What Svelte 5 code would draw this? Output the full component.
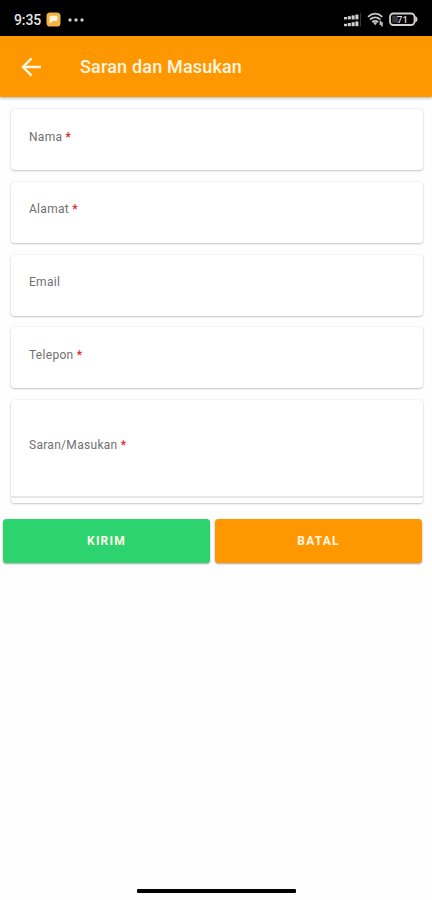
<script>
  const fields = [
    { label: 'Nama', required: true },
    { label: 'Alamat', required: true },
    { label: 'Email', required: false },
    { label: 'Telepon', required: true },
    { label: 'Saran/Masukan', required: true, area: true }
  ];
  const bars = [0, 1, 2, 3];
</script>

<div class="screen">
  <div class="status">
    <span class="time">9:35</span>
    <svg class="app-icon" width="15" height="15" viewBox="0 0 15 15">
      <rect x="0.5" y="0.5" width="14" height="14" rx="3.6" fill="#f5b344" />
      <path d="M4.8 3.8h5.5q1.2 0 1.2 1.2v2.8q0 1.2-1.2 1.2H7l-3.4 2.6V5q0-1.2 1.2-1.2Z" fill="#fff5dc" />
    </svg>
    <svg class="dots" width="16" height="4" viewBox="0 0 16 4" fill="#d8d8d8">
      <rect x="0.5" y="0.5" width="3" height="3" rx="1" /><rect x="6.5" y="0.5" width="3" height="3" rx="1" /><rect x="12.5" y="0.5" width="3" height="3" rx="1" />
    </svg>
    <svg class="signal" width="18" height="16" viewBox="0 0 18 16" fill="#d0d0d0">
      {#each bars as i}
        <rect x={0 + i * 3.8} y={5 - i * 0.8} width="3" height={2.4 + i * 0.8} />
        <rect x={0 + i * 3.8} y={11.8 - i * 0.8} width="3" height={2.4 + i * 0.8} />
      {/each}
      <rect x="16" y="1" width="0.8" height="13.5" fill="#484848" />
    </svg>
    <svg class="wifi" width="18" height="15" viewBox="0 0 18 15" fill="none" stroke="#c8c8c8" stroke-width="1.7">
      <path d="M1 4.8Q8.2-1.5 15.4 4.8" />
      <path d="M3 7.5q5.2-4.3 10.4 0" />
      <path d="M5.2 10q3-2.4 6 0" />
      <path d="M5.8 10.2 8.2 13.2l2.4-3Z" fill="#c8c8c8" stroke="none" />
      <path d="M13.4 8.8v4.2M15 10v4.4" stroke-width="1.5" />
    </svg>
    <svg class="battery" width="30" height="15" viewBox="0 0 30 15">
      <rect x="1" y="1.5" width="24.5" height="11.5" rx="3.4" fill="none" stroke="#d0d0d0" stroke-width="1.8" />
      <path d="M26.2 3.8q2.3 1.4 2.3 3.5t-2.3 3.5Z" fill="#d0d0d0" />
      <rect x="3.2" y="3.7" width="6" height="7" fill="#383838" />
      <text x="13.5" y="10.6" text-anchor="middle" fill="#ddd" font-size="9.5" font-weight="500">71</text>
    </svg>
  </div>

  <header>
    <svg width="22" height="20" viewBox="0 0 22 20" fill="none" stroke="#fff5e3" stroke-width="2.4">
      <path d="M20 10H2.3M10.6 1.4 2 10l8.6 8.6" />
    </svg>
    <h1>Saran dan Masukan</h1>
  </header>

  <main>
    {#each fields as f}
      <div class="card" class:area={f.area}>
        <span class="label">{f.label}{#if f.required}<b>&nbsp;*</b>{/if}</span>
      </div>
    {/each}
  </main>

  <div class="actions">
    <button class="send">KIRIM</button>
    <button class="cancel">BATAL</button>
  </div>

  <div class="home"></div>
</div>

<style>
  .screen {
    width: 432px;
    height: 900px;
    display: flex;
    flex-direction: column;
    background: #fefefe;
    font-family: Roboto, sans-serif;
    overflow: hidden;
  }
  .status {
    flex: none;
    height: 36px;
    box-sizing: border-box;
    padding: 3px 13px 0 14px;
    display: flex;
    align-items: center;
    background: #000;
  }
  .time {
    width: 32px;
    color: #e4e4e4;
    font-size: 14px;
    font-weight: 500;
    letter-spacing: -0.1px;
  }
  .dots { margin-left: 7px; }
  .signal { margin-left: auto; }
  .wifi { margin-left: 5px; }
  .battery { margin-left: 4px; }
  header {
    flex: none;
    height: 61px;
    box-sizing: border-box;
    padding: 0 0 0 21px;
    display: flex;
    align-items: center;
    background: #ff9800;
    box-shadow: 0 1px 3px rgba(0, 0, 0, 0.32);
    z-index: 1;
  }
  h1 {
    margin: 0 0 0 37px;
    color: #fff5e3;
    font-size: 18px;
    font-weight: 500;
    letter-spacing: 0.18px;
    line-height: 24px;
  }
  main {
    padding: 12.4px 9.5px 0 11.4px;
    display: flex;
    flex-direction: column;
    gap: 11.6px;
  }
  .card {
    height: 61px;
    box-sizing: border-box;
    padding: 0 0 6px 17.6px;
    display: flex;
    align-items: center;
    background: #fff;
    border-radius: 4px;
    box-shadow: 0 1px 2px rgba(0, 0, 0, 0.2), 0 0 2px rgba(0, 0, 0, 0.12);
  }
  .card.area {
    height: 103px;
    padding-bottom: 7px;
    background: linear-gradient(#fff 96.5px, #e6e6e6 96.5px, #e6e6e6 97.7px, #fff 97.7px);
  }
  .area .label { margin-top: -5.5px; }
  .label {
    color: #707070;
    font-size: 12px;
    letter-spacing: 0.3px;
    line-height: 16px;
  }
  .label b {
    color: #e3202c;
    font-weight: 500;
  }
  .actions {
    padding: 16.2px 10px 0 3px;
    display: flex;
    gap: 5px;
  }
  button {
    flex: 1;
    height: 44px;
    padding: 0;
    border: 0;
    border-radius: 3.5px;
    color: #fff8ea;
    font: 700 12px/44px Roboto, sans-serif;
    letter-spacing: 1.2px;
    box-shadow: 0 1px 2px rgba(0, 0, 0, 0.36);
  }
  .send { background: #2dd36f; }
  .cancel { background: #ff9800; }
  .home {
    width: 159px;
    height: 4px;
    margin: auto auto 7px 137px;
    border-radius: 1px;
    background: #000;
  }
</style>
